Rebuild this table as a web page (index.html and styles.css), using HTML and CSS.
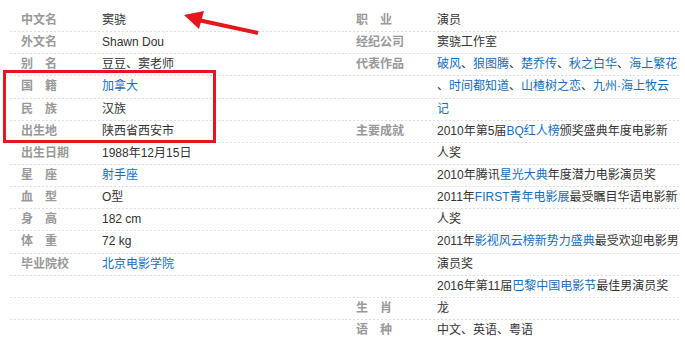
FILE: index.html
```html
<!DOCTYPE html>
<html lang="zh-CN">
<head>
<meta charset="utf-8">
<title>窦骁 基本信息</title>
<link rel="stylesheet" href="styles.css">
</head>
<body>
<div class="basic-info">
  <dl class="col">
    <div class="row"><dt>中文名</dt><dd>窦骁</dd></div>
    <div class="row"><dt>外文名</dt><dd>Shawn Dou</dd></div>
    <div class="row"><dt>别　名</dt><dd>豆豆、窦老师</dd></div>
    <div class="row"><dt>国　籍</dt><dd><a href="#">加拿大</a></dd></div>
    <div class="row"><dt>民　族</dt><dd>汉族</dd></div>
    <div class="row"><dt>出生地</dt><dd>陕西省西安市</dd></div>
    <div class="row"><dt>出生日期</dt><dd>1988年12月15日</dd></div>
    <div class="row"><dt>星　座</dt><dd><a href="#">射手座</a></dd></div>
    <div class="row"><dt>血　型</dt><dd>O型</dd></div>
    <div class="row"><dt>身　高</dt><dd>182 cm</dd></div>
    <div class="row"><dt>体　重</dt><dd>72 kg</dd></div>
    <div class="row"><dt>毕业院校</dt><dd><a href="#">北京电影学院</a></dd></div>
    <div class="row"><dt></dt><dd></dd></div>
    <div class="row"><dt></dt><dd></dd></div>
  </dl>
  <dl class="col">
    <div class="row"><dt>职　业</dt><dd>演员</dd></div>
    <div class="row"><dt>经纪公司</dt><dd>窦骁工作室</dd></div>
    <div class="row"><dt>代表作品</dt><dd><a href="#">破风</a>、<a href="#">狼图腾</a>、<a href="#">楚乔传</a>、<a href="#">秋之白华</a>、<a href="#">海上繁花</a></dd></div>
    <div class="row"><dt></dt><dd>、<a href="#">时间都知道</a>、<a href="#">山楂树之恋</a>、<a href="#">九州·海上牧云</a></dd></div>
    <div class="row"><dt></dt><dd><a href="#">记</a></dd></div>
    <div class="row"><dt>主要成就</dt><dd>2010年第5届<a href="#">BQ红人榜</a>颁奖盛典年度电影新</dd></div>
    <div class="row"><dt></dt><dd>人奖</dd></div>
    <div class="row"><dt></dt><dd>2010年腾讯<a href="#">星光大典</a>年度潜力电影演员奖</dd></div>
    <div class="row"><dt></dt><dd>2011年<a href="#">FIRST青年电影展</a>最受瞩目华语电影新</dd></div>
    <div class="row"><dt></dt><dd>人奖</dd></div>
    <div class="row"><dt></dt><dd>2011年<a href="#">影视风云榜新势力盛典</a>最受欢迎电影男</dd></div>
    <div class="row"><dt></dt><dd>演员奖</dd></div>
    <div class="row"><dt></dt><dd>2016年第11届<a href="#">巴黎中国电影节</a>最佳男演员奖</dd></div>
    <div class="row"><dt>生　肖</dt><dd>龙</dd></div>
    <div class="row last"><dt>语　种</dt><dd>中文、英语、粤语</dd></div>
  </dl>
</div>
<div class="annot-box"></div>
<svg class="annot-arrow" width="685" height="362" viewBox="0 0 685 362" aria-hidden="true">
  <line x1="198" y1="20" x2="258" y2="33" stroke="#e5161e" stroke-width="4"/>
  <polygon points="184,15 204,11 199,29" fill="#e5161e"/>
</svg>
</body>
</html>
```

FILE: styles.css
```css
html, body {
  margin: 0;
  padding: 0;
  background: #fff;
}

body {
  font-family: "Liberation Sans", "Noto Sans CJK SC", sans-serif;
  font-size: 12px;
  color: #333;
  position: relative;
  width: 685px;
  height: 362px;
  overflow: hidden;
}

.basic-info {
  display: flex;
  padding: 10px 0 0 10px;
  width: 670px;
}

.col {
  margin: 0;
  width: 335px;
  flex: none;
}

.row {
  display: flex;
  height: 22.15px;
  box-sizing: border-box;
  line-height: 21px;
  background-image: linear-gradient(to right, #dedede 50%, transparent 50%);
  background-size: 4px 1px;
  background-repeat: repeat-x;
  background-position: left bottom;
}

.row.last {
  background-image: none;
}

.row dt {
  flex: none;
  width: 81px;
  padding-left: 11px;
  font-weight: bold;
  color: #999;
  white-space: nowrap;
}

.row dd {
  margin: 0;
  white-space: nowrap;
}

a {
  color: #136ec2;
  text-decoration: none;
}

.annot-box {
  position: absolute;
  left: 3px;
  top: 70px;
  width: 213px;
  height: 73px;
  box-sizing: border-box;
  border: 3px solid #e5161e;
}

.annot-arrow {
  position: absolute;
  left: 0;
  top: 0;
  pointer-events: none;
}
```
